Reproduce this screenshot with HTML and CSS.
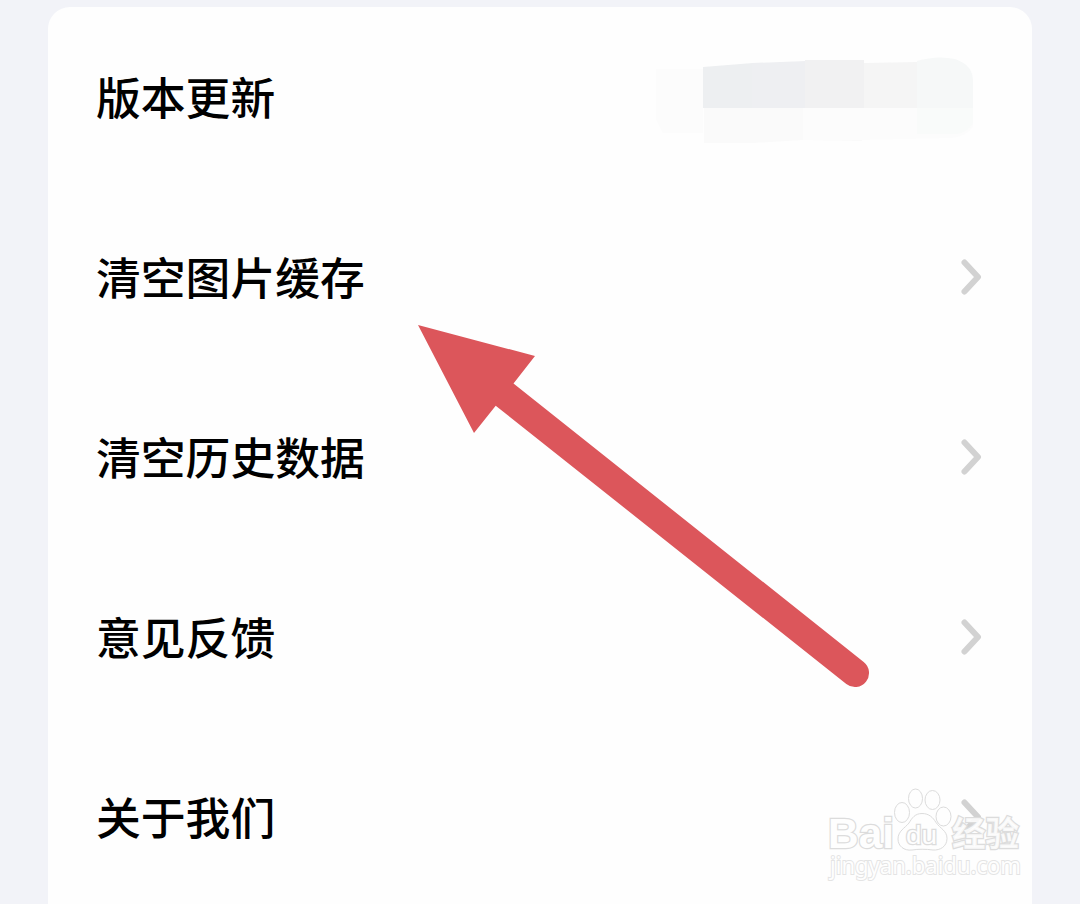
FILE: index.html
```html
<!DOCTYPE html>
<html lang="zh-CN">
<head>
    <meta charset="UTF-8">
    <meta name="viewport" content="width=device-width, initial-scale=1.0">
    <title>设置</title>
    <link rel="stylesheet" href="styles.css">
</head>
<body>
    <ul class="settings">
        <li class="item">
            <span class="label">版本更新</span>
            <svg class="version" width="330" height="90" viewBox="0 0 330 90">
                <path fill="#fcfcfc" d="M5 16h47v64H12l-7-14z"/>
                <path fill="#fafafa" d="M53 52h158v36l-59-1-50 3H53z"/>
                <path fill="#fcfcfc" d="M152 52h170v22q-8 10-22 11l-93 2h-55z"/>
                <path fill="#edeff1" d="M52 14l50-4v45H52z"/>
                <path fill="#eeeff2" d="M101 10l54-2v47h-54z"/>
                <path fill="#f1f1f2" d="M154 7h59v48h-59z"/>
                <path fill="#f5f5f5" d="M213 10l54-1v46h-54z"/>
                <path fill="#f6f8f8" d="M266 8q20-6 38-2 18 6 18 22v27h-56z"/>
                <path fill="#f9fbfa" d="M266 55h56v15q-5 9-16 11h-40z"/>
            </svg>
        </li>
        <li class="item">
            <span class="label">清空图片缓存</span>
            <svg class="chevron" width="26" height="40" viewBox="0 0 26 40"><path d="M6.500 5.500L20 20 6.500 34.500"/></svg>
        </li>
        <li class="item">
            <span class="label">清空历史数据</span>
            <svg class="chevron" width="26" height="40" viewBox="0 0 26 40"><path d="M6.500 5.500L20 20 6.500 34.500"/></svg>
        </li>
        <li class="item">
            <span class="label">意见反馈</span>
            <svg class="chevron" width="26" height="40" viewBox="0 0 26 40"><path d="M6.500 5.500L20 20 6.500 34.500"/></svg>
        </li>
        <li class="item">
            <span class="label">关于我们</span>
            <svg class="chevron" width="26" height="40" viewBox="0 0 26 40"><path d="M6.500 5.500L20 20 6.500 34.500"/></svg>
        </li>
    </ul>

    <svg class="arrow" width="460" height="370" viewBox="0 0 460 370">
        <path d="M8 5l117 31-21.500 27.500L453.700 342a14 14 0 0 1-17.400 22L85.700 85.700 64 113z"/>
    </svg>

    <!-- watermark -->
    <svg class="watermark" width="230" height="134" viewBox="0 0 230 134">
        <text class="brand" x="18" y="78" textLength="66" lengthAdjust="spacingAndGlyphs">Bai</text>
        <g class="paw">
            <ellipse cx="92" cy="42.500" rx="7.500" ry="10"/>
            <ellipse cx="105.500" cy="28.500" rx="7" ry="9.500"/>
            <ellipse cx="122.500" cy="30" rx="7.500" ry="9.500"/>
            <ellipse cx="133.500" cy="46.500" rx="7.500" ry="9.500"/>
            <path d="M112 43.500c7 0 11 4 14 9 4 6 11 8 11 16 0 8-7 12-14 11.500-7-1-15-1-21 0-8 1-14-4-14-11 0-8 7-11 11-16 3-5 6-9.500 13-9.500z"/>
        </g>
        <text class="du" x="96" y="74" textLength="31" lengthAdjust="spacingAndGlyphs">du</text>
        <text class="jingyan" x="142" y="76" textLength="67" lengthAdjust="spacingAndGlyphs">经验</text>
        <text class="url" x="20" y="104" textLength="191" lengthAdjust="spacingAndGlyphs">jingyan.baidu.com</text>
    </svg>
</body>
</html>
```

FILE: styles.css
```css
body {
    margin: 0;
    height: 904px;
    overflow: hidden;
    position: relative;
    background: #f2f3f8;
    font-family: "Noto Sans CJK SC", sans-serif;
    color: #000;
}
.settings {
    list-style: none;
    margin: 7px 48px 0;
    padding: 3px 48px 0;
    background: #fefefe;
    border-radius: 22px 22px 0 0;
}
.item {
    display: flex;
    justify-content: space-between;
    align-items: center;
    height: 180px;
}
.label {
    font-size: 44.800px;
    line-height: 60px;
    font-weight: 500;
    padding-bottom: 8px;
}
.version {
    margin: 0 3px 4px 0;
}
.chevron {
    margin: 0 0 6px;
    fill: none;
    stroke: #d2d2d2;
    stroke-width: 6;
    stroke-linecap: round;
    stroke-linejoin: round;
}
.arrow {
    position: absolute;
    left: 410px;
    top: 320px;
    fill: #dc565b;
}
.watermark {
    position: absolute;
    left: 810px;
    top: 770px;
    fill: #fefefe;
    stroke: #dcdcdc;
    stroke-width: 1;
}
.brand {
    font: bold 43px "Liberation Sans", sans-serif;
    stroke-width: 2.500;
    paint-order: stroke;
}
.du {
    font: 26px "Liberation Sans", sans-serif;
    stroke-width: 2.500;
    paint-order: stroke;
}
.jingyan {
    font: bold 34px "Noto Sans CJK SC", sans-serif;
    stroke-width: 2.500;
    paint-order: stroke;
    fill-opacity: 0.850;
}
.url {
    font: 24px "Noto Sans", sans-serif;
    stroke: #e4e4e4;
    stroke-width: 2;
    paint-order: stroke;
}
```
